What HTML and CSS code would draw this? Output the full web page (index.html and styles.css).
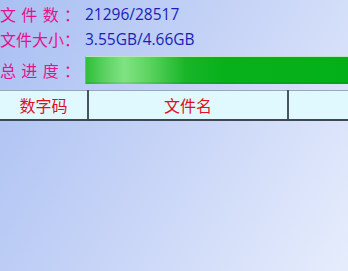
FILE: index.html
```html
<!DOCTYPE html>
<html lang="zh-CN">
<head>
  <meta charset="UTF-8" />
  <title>文件传输</title>
  <link rel="stylesheet" href="styles.css">
</head>
<body>
  <div class="info">
    <div class="row"><span class="label">文件数：</span><span class="value">21296/28517</span></div>
    <div class="row"><span class="label">文件大小：</span><span class="value">3.55GB/4.66GB</span></div>
    <div class="row progress-row">
      <span class="label">总进度：</span>
      <div class="bar"><div class="fill" style="width:100%"></div></div>
    </div>
  </div>
  <table class="list">
    <thead>
      <tr><th class="col-code">数字码</th><th class="col-name">文件名</th><th class="col-rest"></th></tr>
    </thead>
  </table>
</body>
</html>
```

FILE: styles.css
```css
html, body {
  height: 100%;
}
body {
  margin: 0;
  overflow: hidden;
  font-family: "Noto Sans CJK SC", "Noto Sans", sans-serif;
  background: linear-gradient(120deg, #a9c0f3 0%, #c4d2f6 45%, #e6edfc 100%);
}
.info {
  padding-top: 1px;
}
.row {
  display: flex;
  align-items: center;
  height: 25px;
  font-size: 16px;
}
.label {
  width: 80px;
  margin-right: 5px;
  color: #e4128c;
  text-align-last: justify;
}
.value {
  color: #1a1eb8;
  font-family: "Open Sans", "Noto Sans", sans-serif;
  font-size: 15.5px;
}
.progress-row {
  height: 29px;
  margin-top: 4px;
}
.bar {
  flex: 1;
  height: 27px;
  border-top: 1px solid #b9e6bd;
  border-left: 1px solid #7fb088;
  background: #d8e4f4;
}
.fill {
  height: 100%;
  background: linear-gradient(90deg, #2fbf3a 0px, #5fd264 20px, #80e383 38px, #5fd462 62px, #18b528 100px, #06b11b 140px, #04b019 100%);
  box-shadow: inset 0 -2px 0 rgba(0,90,0,0.12);
}
.list {
  margin-top: 6px;
  border-collapse: collapse;
  width: 360px;
  table-layout: fixed;
}
.list th {
  height: 28px;
  padding: 0;
  background: #e0f9ff;
  border-top: 1px solid #9aa8b8;
  border-bottom: 2px solid #3e4852;
  border-right: 2px solid #4a545e;
  color: #e01020;
  font-weight: normal;
  font-size: 16px;
}
.col-code { width: 87px; }
.col-name { width: 198px; }
```
